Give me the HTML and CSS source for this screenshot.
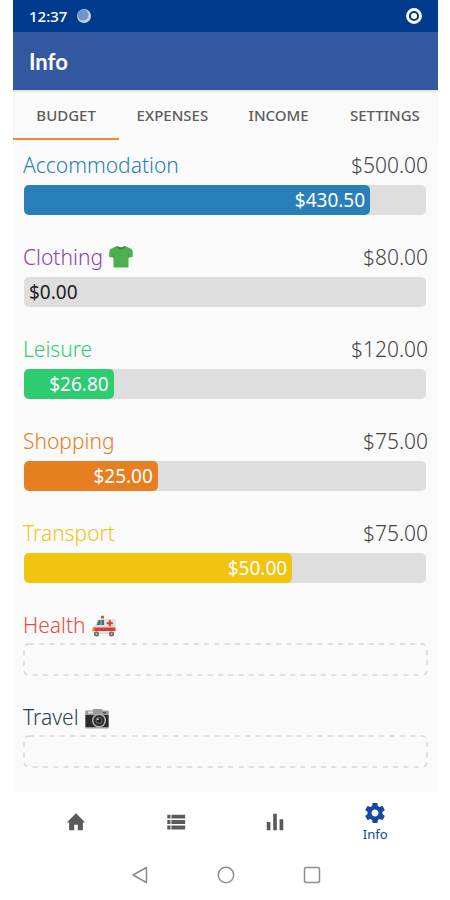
FILE: index.html
```
<!DOCTYPE html>
<html lang="en">
<head>
    <meta charset="UTF-8">
    <meta name="viewport" content="width=device-width, initial-scale=1.0">
    <title>Info</title>
    <link rel="stylesheet" href="styles.css">
</head>
<body>
    <div class="phone">
        <div class="status-bar">
            <span>12:37</span>
            <svg class="status-moon" viewBox="0 0 14 14" aria-hidden="true">
                <circle cx="7" cy="7" r="7" fill="#c3cfe4"/>
                <circle cx="6" cy="6" r="5.500" fill="#7594c6"/>
            </svg>
            <svg class="status-target" viewBox="0 0 16 16" aria-hidden="true">
                <circle cx="8" cy="8" r="6.500" fill="none" stroke="#fff" stroke-width="2.800"/>
                <circle cx="8" cy="8" r="3" fill="#fff"/>
            </svg>
        </div>

        <header class="app-bar">
            <h1>Info</h1>
        </header>

        <nav class="tabs">
            <button type="button" class="tab active">BUDGET</button>
            <button type="button" class="tab">EXPENSES</button>
            <button type="button" class="tab">INCOME</button>
            <button type="button" class="tab">SETTINGS</button>
        </nav>

        <main class="budgets">
            <section class="budget accommodation">
                <div class="budget-head">
                    <h2>Accommodation</h2>
                    <span class="limit">$500.00</span>
                </div>
                <div class="bar">
                    <div class="fill" style="width: 86.1%">$430.50</div>
                </div>
            </section>

            <section class="budget clothing">
                <div class="budget-head">
                    <h2>Clothing</h2>
                    <svg class="emoji" viewBox="0 0 24 24" aria-hidden="true">
                        <path d="M7 1.500L1.500 4Q.4 5 .3 7L.2 12l4.300.500V22.500h15V12.500L23.800 12 23.700 7Q23.600 5 22.500 4L17 1.500Q12 4.500 7 1.500z" fill="#4caf50"/>
                        <path d="M7 1.500Q12 7.500 17 1.500L15.500 1Q12 3.500 8.500 1z" fill="#2e8b3d"/>
                        <path d="M4.500 12.500V8M19.500 12.500V8" stroke="#3a9a45" fill="none"/>
                    </svg>
                    <span class="limit">$80.00</span>
                </div>
                <div class="bar">
                    <div class="empty">$0.00</div>
                </div>
            </section>

            <section class="budget leisure">
                <div class="budget-head">
                    <h2>Leisure</h2>
                    <span class="limit">$120.00</span>
                </div>
                <div class="bar">
                    <div class="fill" style="width: 22.3%">$26.80</div>
                </div>
            </section>

            <section class="budget shopping">
                <div class="budget-head">
                    <h2>Shopping</h2>
                    <span class="limit">$75.00</span>
                </div>
                <div class="bar">
                    <div class="fill" style="width: 33.3%">$25.00</div>
                </div>
            </section>

            <section class="budget transport">
                <div class="budget-head">
                    <h2>Transport</h2>
                    <span class="limit">$75.00</span>
                </div>
                <div class="bar">
                    <div class="fill" style="width: 66.7%">$50.00</div>
                </div>
            </section>

            <section class="budget health">
                <div class="budget-head">
                    <h2>Health</h2>
                    <svg class="emoji" viewBox="0 0 24 24" aria-hidden="true">
                        <g transform="translate(0 1.500)">
                            <path d="M9 2.500a1.500 1.500 0 0 1 3 0V4H9z" fill="#d9473f"/>
                            <path d="M6 4.500h16.500q1 0 1 1v14H1.500Q.5 19.500.5 18v-4.500Q1 11 3.500 10.500z" fill="#dedede"/>
                            <path d="M6.800 5.500H12v5H4.600z" fill="#3e6f7c"/>
                            <path d="M9 5.500v5" stroke="#a9c4cb"/>
                            <path d="M.8 13h22.700v3.500H.5z" fill="#dc3b31"/>
                            <path d="M16.800 5.800h2v2h2v2h-2v2h-2v-2h-2v-2h2z" fill="#dc3b31"/>
                            <path d="M.5 14h2v2h-2z" fill="#f5c242"/>
                            <circle cx="4.500" cy="19.500" r="2.500" fill="#666"/>
                            <circle cx="19.500" cy="19.500" r="2.500" fill="#666"/>
                            <circle cx="4.500" cy="19.500" r="1" fill="#ccc"/>
                            <circle cx="19.500" cy="19.500" r="1" fill="#ccc"/>
                        </g>
                    </svg>
                </div>
                <svg class="no-budget" aria-hidden="true">
                    <rect x="1" y="1" rx="5"/>
                </svg>
            </section>

            <section class="budget travel">
                <div class="budget-head">
                    <h2>Travel</h2>
                    <svg class="emoji" viewBox="0 0 24 24" aria-hidden="true">
                        <g transform="translate(0 1.500)">
                            <path d="M.3 5q0-1 1-1h5.700l1.500-1.500h8L18 4h4.700q1 0 1 1v16q0 1-1 1H1.300q-1 0-1-1z" fill="#9a9a9a"/>
                            <path d="M.5 8.500h23V20.500H.5z" fill="#2b2b2b"/>
                            <path d="M3 5h5v2H3z" fill="#ddd"/>
                            <path d="M18 5.500h3V7h-3z" fill="#555"/>
                            <circle cx="14" cy="14" r="7" fill="#b5b5b5"/>
                            <circle cx="14" cy="14" r="5.500" fill="#292929"/>
                            <circle cx="14" cy="14" r="3.500" fill="#666"/>
                            <circle cx="14" cy="14" r="2.300" fill="#1c1c1c"/>
                            <circle cx="12.800" cy="12.800" r="1" fill="#ccc"/>
                        </g>
                    </svg>
                </div>
                <svg class="no-budget" aria-hidden="true">
                    <rect x="1" y="1" rx="5"/>
                </svg>
            </section>
        </main>

        <nav class="bottom-nav">
            <a href="#" aria-label="Home">
                <svg viewBox="0 0 24 24"><path d="M10 21v-6h4v6h5.500v-8.500h2.500L12 2.500 2 12.500h2.500V21z"/></svg>
            </a>
            <a href="#" aria-label="List">
                <svg viewBox="0 0 24 24"><path d="M2.500 4h3.500v4.300H2.500zM7 4h15v4.300H7zM2.500 9.900h3.500v4.300H2.500zM7 9.900h15v4.300H7zM2.500 15.800h3.500v4.300H2.500zM7 15.800h15v4.300H7z"/></svg>
            </a>
            <a href="#" aria-label="Statistics">
                <svg viewBox="0 0 24 24"><path d="M10 3h4v18h-4zM3 12h4v9H3zM17 9h4v12h-4z"/></svg>
            </a>
            <a href="#" class="active">
                <svg viewBox="0 0 24 24"><path d="M19.430 12.980c.04-.32.070-.64.070-.98s-.03-.66-.07-.98l2.110-1.650c.19-.15.240-.42.120-.64l-2-3.460c-.12-.22-.39-.3-.61-.22l-2.490 1c-.52-.4-1.080-.73-1.690-.98l-.38-2.650C14.460 2.180 14.250 2 14 2h-4c-.25 0-.46.18-.49.42l-.38 2.650c-.61.25-1.170.59-1.690.98l-2.490-1c-.23-.09-.49 0-.61.22l-2 3.460c-.13.22-.07.49.12.64l2.110 1.650c-.04.32-.07.65-.07.98s.03.66.07.98l-2.110 1.650c-.19.15-.24.42-.12.64l2 3.460c.12.22.39.3.61.22l2.490-1c.52.4 1.080.73 1.690.98l.38 2.650c.03.24.24.42.49.42h4c.25 0 .46-.18.49-.42l.38-2.650c.61-.25 1.170-.59 1.690-.98l2.490 1c.23.09.49 0 .61-.22l2-3.460c.12-.22.07-.49-.12-.64zM12 15.500c-1.930 0-3.500-1.570-3.500-3.500s1.570-3.500 3.500-3.500 3.500 1.570 3.500 3.500-1.570 3.500-3.500 3.500z"/></svg>
                <span>Info</span>
            </a>
        </nav>

        <div class="system-nav">
            <button type="button" aria-label="Back">
                <svg viewBox="0 0 18 18"><path d="M15.500 1.500v15L2 9z"/></svg>
            </button>
            <button type="button" aria-label="Home screen">
                <svg viewBox="0 0 18 18"><circle cx="9" cy="9" r="7.700"/></svg>
            </button>
            <button type="button" aria-label="Recent apps">
                <svg viewBox="0 0 18 18"><rect x="1.500" y="1.500" width="15" height="15" rx="2"/></svg>
            </button>
        </div>
    </div>
</body>
</html>
```
FILE: styles.css
```
* {
    box-sizing: border-box;
}
body {
    margin: 0;
    padding: 0 12px 0 13px;
    background-color: #fff;
    font-family: "Noto Sans", "Open Sans", sans-serif;
}
h1, h2 {
    margin: 0;
}
button {
    padding: 0;
    border: none;
    background: none;
    font-family: inherit;
    cursor: pointer;
}
svg {
    display: block;
}
.phone {
    display: flex;
    flex-direction: column;
    min-height: 100vh;
}
.status-bar {
    display: flex;
    align-items: center;
    height: 32px;
    padding: 0 16px;
    background-color: #003b8e;
    color: #fff;
    font-size: 15px;
    font-weight: 500;
}
.status-moon {
    width: 14px;
    height: 14px;
    margin-left: 10px;
}
.status-target {
    width: 16px;
    height: 16px;
    margin-left: auto;
}
.app-bar {
    display: flex;
    align-items: center;
    height: 58px;
    padding: 0 16px;
    background-color: #32599f;
    color: #fff;
}
.app-bar h1 {
    font-family: Lato, "Noto Sans", sans-serif;
    font-size: 22px;
    font-weight: 700;
}
.tabs {
    display: grid;
    grid-template-columns: repeat(4, 1fr);
    height: 50px;
    background-color: #fafafa;
    box-shadow: inset 0 2px 2px rgba(0, 0, 0, 0.1);
}
.tab {
    padding-top: 2px;
    border-bottom: 2px solid transparent;
    color: #5c5c5c;
    font-size: 15px;
    font-weight: 500;
}
.tab.active {
    border-bottom-color: #ee8a3c;
}
.budgets {
    display: flex;
    flex: 1;
    flex-direction: column;
    gap: 28px;
    padding: 11px 10px 24px;
    background-color: #fafafa;
}
.budget-head {
    display: flex;
    align-items: center;
    gap: 6px;
    height: 28px;
}
.budget-head h2 {
    font-size: 21px;
    font-weight: 300;
}
.emoji {
    width: 24px;
    height: 24px;
}
.limit {
    margin-left: auto;
    color: #444;
    font-size: 21px;
    font-weight: 300;
}
.bar {
    height: 30px;
    margin: 6px 2px 0 1px;
    border-radius: 5px;
    background-color: #dedede;
    font-size: 19px;
    line-height: 30px;
}
.fill {
    height: 100%;
    padding-right: 5px;
    border-radius: 5px;
    color: #fff;
    text-align: right;
}
.empty {
    padding-left: 5px;
    color: #222;
}
.no-budget {
    width: 100%;
    height: 33px;
    margin: 4px 0 -1px;
}
.no-budget rect {
    width: calc(100% - 2px);
    height: 31px;
    fill: none;
    stroke: #d6d6d6;
    stroke-width: 1.5;
    stroke-dasharray: 5 5.3;
}
.accommodation h2 {
    color: #2980b9;
}
.accommodation .fill {
    background-color: #2980b9;
}
.clothing h2 {
    color: #8e44ad;
}
.leisure h2 {
    color: #2ecc71;
}
.leisure .fill {
    background-color: #2ecc71;
}
.shopping h2 {
    color: #e67e22;
}
.shopping .fill {
    background-color: #e67e22;
}
.transport h2 {
    color: #f1c40f;
}
.transport .fill {
    background-color: #f1c40f;
}
.health h2 {
    color: #e74c3c;
}
.travel h2 {
    color: #2c3e50;
}
.bottom-nav {
    display: grid;
    grid-template-columns: repeat(4, 1fr);
    height: 58px;
    padding: 0 13px;
}
.bottom-nav a {
    display: flex;
    flex-direction: column;
    align-items: center;
    justify-content: center;
    padding-top: 2px;
    color: #5a5a5a;
    text-decoration: none;
}
.bottom-nav a.active {
    color: #17479e;
}
.bottom-nav svg {
    width: 22px;
    height: 22px;
    fill: currentColor;
}
.bottom-nav .active svg {
    width: 24px;
    height: 24px;
}
.bottom-nav span {
    font-size: 13px;
    line-height: 18px;
}
.system-nav {
    display: flex;
    align-items: center;
    justify-content: center;
    gap: 68px;
    height: 50px;
}
.system-nav svg {
    width: 18px;
    height: 18px;
    fill: none;
    stroke: #8c8c8c;
    stroke-width: 1.5;
    stroke-linejoin: round;
}
```
